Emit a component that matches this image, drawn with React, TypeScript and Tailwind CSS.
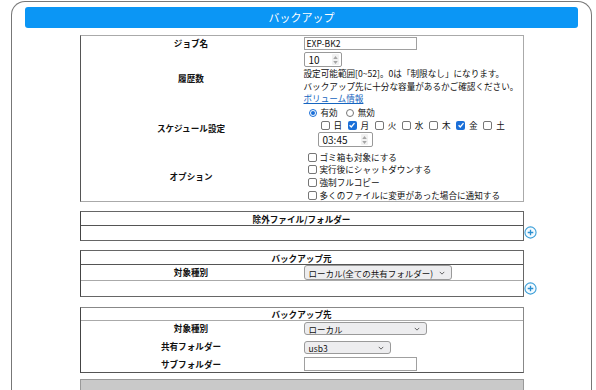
import * as React from 'react';

// form row: bold centered label on the left half, controls on the right
function Row({ label, children, className = '' }: { label: string; children: React.ReactNode; className?: string }) {
  return (
    <div className="grid grid-cols-[221px_1fr] items-center">
      <div className="text-center font-bold">{label}</div>
      <div className={`pl-[2px] ${className}`}>{children}</div>
    </div>
  );
}

function Check({ checked = false }: { checked?: boolean }) {
  if (checked) {
    return (
      <span className="flex size-[9px] shrink-0 items-center justify-center rounded-[2px] bg-[#1a6fd8]">
        <svg viewBox="0 0 10 10" className="size-[8px]">
          <path d="M2 5.3 4.1 7.4 8.1 2.7" fill="none" stroke="#fff" strokeWidth="1.7" />
        </svg>
      </span>
    );
  }
  return <span className="size-[9px] shrink-0 rounded-[2px] border border-[#767676] bg-white" />;
}

function Radio({ checked = false }: { checked?: boolean }) {
  return (
    <span
      className={`flex size-[8px] shrink-0 items-center justify-center rounded-full border ${
        checked ? 'border-[#1a6fd8]' : 'border-[#767676]'
      }`}
    >
      {checked && <span className="size-[4px] rounded-full bg-[#1a6fd8]" />}
    </span>
  );
}

function Spin() {
  return (
    <span className="flex h-[11px] w-[7px] flex-col items-center justify-center gap-[2px] rounded-[1px] bg-[#f1f1f1]">
      <svg viewBox="0 0 6 4" className="h-[3px] w-[5px]">
        <path d="M0 4 3 0 6 4Z" fill="#a5a5a5" />
      </svg>
      <svg viewBox="0 0 6 4" className="h-[3px] w-[5px]">
        <path d="M0 0 3 4 6 0Z" fill="#a5a5a5" />
      </svg>
    </span>
  );
}

function Chevron() {
  return (
    <svg viewBox="0 0 8 5" className="h-[4px] w-[6px] shrink-0">
      <path d="M1 1 4 4 7 1" fill="none" stroke="#444" strokeWidth="1.1" />
    </svg>
  );
}

function Select({ value, w, h }: { value: string; w: string; h: string }) {
  return (
    <div
      className={`flex ${w} ${h} items-center justify-between gap-[4px] whitespace-nowrap rounded-[3px] border border-[#9a9a9a] bg-[#ededef] pl-[4px] pr-[6px] text-[8.5px] leading-none`}
    >
      <span>{value}</span>
      <Chevron />
    </div>
  );
}

function Plus() {
  return (
    <svg viewBox="0 0 14 14" className="size-[13px]">
      <circle cx="7" cy="7" r="6" fill="#f4fbff" stroke="#3d9fd8" strokeWidth="1.2" />
      <path d="M7 4v6M4 7h6" stroke="#2b8fd0" strokeWidth="1.4" />
    </svg>
  );
}

const days = [
  { d: '日', on: false },
  { d: '月', on: true },
  { d: '火', on: false },
  { d: '水', on: false },
  { d: '木', on: false },
  { d: '金', on: true },
  { d: '土', on: false },
];

const options = [
  'ゴミ箱も対象にする',
  '実行後にシャットダウンする',
  '強制フルコピー',
  '多くのファイルに変更があった場合に通知する',
];

export default function App() {
  return (
    <div className="h-[390px] overflow-hidden bg-white font-['Noto_Sans_CJK_JP','Noto_Sans',sans-serif] text-[8.6px] text-[#111]">
      <div className="ml-[11px] mt-[1px] h-[400px] w-[581px] rounded-t-[14px] border border-b-0 border-[#777]">
        <div className="mx-[13px] mt-[5px] flex h-[21px] items-center justify-center rounded-[3px] bg-[#0b96f5] text-[11px] text-white">
          バックアップ
        </div>

        {/* job settings */}
        <div className="mt-[7px] grid grid-cols-[1fr_444px_1fr]">
          <div className="col-start-2 border border-[#aaa] border-l-[#555]">
            <Row label="ジョブ名" className="py-[1px]">
              <div className="flex h-[13px] w-[113px] items-center border border-[#a0a0a0] px-[2px] leading-none">
                EXP-BK2
              </div>
            </Row>
            <Row label="履歴数" className="pb-[0.5px] pt-[1px] leading-[12.5px]">
              <div className="flex h-[15px] w-[38px] items-center justify-between rounded-[2px] border border-[#999] pl-[4px] pr-[2px] text-[10px] leading-none">
                <span>10</span>
                <Spin />
              </div>
              <div className="whitespace-nowrap">設定可能範囲[0~52]。0は「制限なし」になります。</div>
              <div className="whitespace-nowrap">バックアップ先に十分な容量があるかご確認ください。</div>
              <a className="text-[#1565c0] underline">ボリューム情報</a>
            </Row>
            <Row label="スケジュール設定" className="pb-[4px] pt-[1px]">
              <div className="flex h-[13px] items-center pl-[5px]">
                <Radio checked />
                <span className="ml-[4px] mr-[8px]">有効</span>
                <Radio />
                <span className="ml-[4px]">無効</span>
              </div>
              <div className="flex h-[13px] items-center pl-[17px]">
                {days.map((x) => (
                  <div key={x.d} className="mr-[5.5px] flex items-center">
                    <Check checked={x.on} />
                    <span className="ml-[4px]">{x.d}</span>
                  </div>
                ))}
              </div>
              <div className="ml-[14px] flex h-[15px] w-[55px] items-center justify-between rounded-[2px] border border-[#999] pl-[4px] pr-[4px] text-[10px] leading-none">
                <span>03:45</span>
                <Spin />
              </div>
            </Row>
            <Row label="オプション">
              {options.map((o) => (
                <div key={o} className="flex h-[12.6px] items-center pl-[4px]">
                  <Check />
                  <span className="ml-[3px]">{o}</span>
                </div>
              ))}
            </Row>
          </div>
        </div>

        {/* exclusions */}
        <div className="mt-[9px] grid grid-cols-[1fr_444px_1fr]">
          <div className="col-start-2 border border-[#666] border-l-[#444]">
            <div className="h-[14px] border-b border-[#555] text-center font-bold leading-[14px]">
              除外ファイル/フォルダー
            </div>
            <div className="h-[14px]" />
          </div>
          <div className="self-end pb-[2px]">
            <Plus />
          </div>
        </div>

        {/* source */}
        <div className="mt-[9px] grid grid-cols-[1fr_444px_1fr]">
          <div className="col-start-2 border border-[#666] border-l-[#444]">
            <div className="h-[14px] border-b border-[#555] text-center font-bold leading-[14px]">バックアップ元</div>
            <div className="h-[16px] border-b border-[#aaa]">
              <Row label="対象種別">
                <Select value="ローカル(全ての共有フォルダー)" w="w-[148px]" h="h-[15px]" />
              </Row>
            </div>
            <div className="h-[15px]" />
          </div>
          <div className="self-end pb-[2px]">
            <Plus />
          </div>
        </div>

        {/* destination */}
        <div className="mt-[10px] grid grid-cols-[1fr_444px_1fr]">
          <div className="col-start-2 border border-[#888] border-b-[#555] border-l-[#444]">
            <div className="h-[13px] border-b border-[#aaa] text-center font-bold leading-[13px]">バックアップ先</div>
            <Row label="対象種別" className="py-[1px]">
              <Select value="ローカル" w="w-[123px]" h="h-[13px]" />
            </Row>
            <Row label="共有フォルダー" className="pb-[3px] pt-[5px]">
              <Select value="usb3" w="w-[87px]" h="h-[13px]" />
            </Row>
            <Row label="サブフォルダー" className="pb-[1px]">
              <div className="h-[14px] w-[113px] border border-[#a0a0a0]" />
            </Row>
          </div>
        </div>

        <div className="mt-[6px] grid grid-cols-[1fr_444px_1fr]">
          <div className="col-start-2 h-[20px] border border-[#999] bg-[#c9c9c9]" />
        </div>
      </div>
    </div>
  );
}
